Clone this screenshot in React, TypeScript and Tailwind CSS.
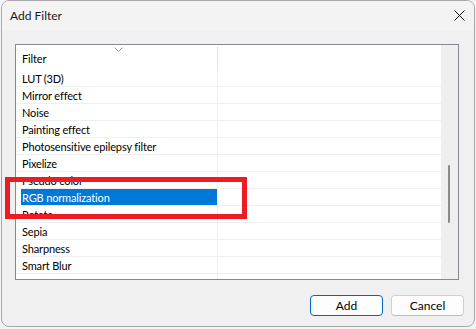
import React from "react";

const rows = [
  "LUT (3D)",
  "Mirror effect",
  "Noise",
  "Painting effect",
  "Photosensitive epilepsy filter",
  "Pixelize",
  "Pseudo color",
  "RGB normalization",
  "Rotate",
  "Sepia",
  "Sharpness",
  "Smart Blur",
  "",
];

export default function App() {
  return (
    <div
      className="relative w-[476px] h-[329px] bg-[#f4f4f4] overflow-hidden"
      style={{ fontFamily: '"Segoe UI", Lato, "Noto Sans", sans-serif' }}
    >
      <div className="ml-[1px] w-[474px] h-[327px] border border-[#a8a8a8] rounded-[8px] overflow-hidden bg-[#f0f0f0] flex flex-col">
        <div className="h-[30px] bg-[#f3f3f3] flex items-center justify-between pl-[8px] pr-[8px]">
          <span className="text-[12px] text-[#1a1a1a] leading-none mt-[-1px]">Add Filter</span>
          <svg width="11" height="11" viewBox="0 0 11 11" className="mr-[1px] mt-[-2px]">
            <path d="M0.5 0.5 L10.5 10.5 M10.5 0.5 L0.5 10.5" stroke="#111" strokeWidth="1" fill="none" />
          </svg>
        </div>
        <div className="flex flex-col pl-[13px]">
          <div className="mt-[13px] w-[444px] h-[236px] border border-[#848891] bg-white flex">
            <div className="w-[425px] h-full overflow-hidden flex flex-col">
              <div className="h-[25px] flex shrink-0 relative">
                <div className="w-[202px] mt-[1px] border-r border-[#e3e3e3] pl-[6px] pt-[2px] flex items-center text-[11px] tracking-[-0.15px] text-black">
                  Filter
                </div>
                <svg width="9" height="5" viewBox="0 0 9 5" className="absolute left-[98px] top-[2px]">
                  <path d="M0.5 0.5 L4.5 4.5 L8.5 0.5" stroke="#9a9a9a" strokeWidth="1" fill="none" />
                </svg>
              </div>
              {rows.map((r, i) => {
                const sel = r === "RGB normalization";
                return (
                  <div key={i} className="h-[17px] shrink-0 flex border-b border-[#efefef]">
                    <div className="w-[202px] h-[16px] border-r border-[#efefef] pl-[5px] flex">
                      <div
                        className={
                          sel
                            ? "w-[196px] h-[16px] bg-[#0078d7] text-white pl-[1px] pt-[1px] text-[11px] tracking-[-0.15px] leading-[16px]"
                            : "w-[196px] h-[16px] text-black pl-[1px] pt-[1px] text-[11px] tracking-[-0.15px] leading-[16px]"
                        }
                      >
                        {r}
                      </div>
                    </div>
                  </div>
                );
              })}
            </div>
            <div className="w-[17px] h-full bg-[#efefef] flex flex-col pl-[7px] pt-[120px]">
              <div className="w-[2px] h-[58px] bg-[#8a8a8a] rounded-full" />
            </div>
          </div>
        </div>
        <div className="flex justify-end gap-[8px] pr-[10px] mt-[15px]">
          <button className="w-[73px] h-[21px] rounded-[4px] border border-[#0067c0] bg-[#fdfdfd] text-[12px] text-black leading-none">
            Add
          </button>
          <button className="w-[73px] h-[21px] rounded-[4px] border border-[#d0d0d0] border-b-[#bdbdbd] bg-[#fdfdfd] text-[12px] text-black leading-none">
            Cancel
          </button>
        </div>
      </div>
      <div className="absolute left-[5px] top-[177px] w-[242px] h-[42px] border-[5px] border-[#ed1c24]" />
    </div>
  );
}
